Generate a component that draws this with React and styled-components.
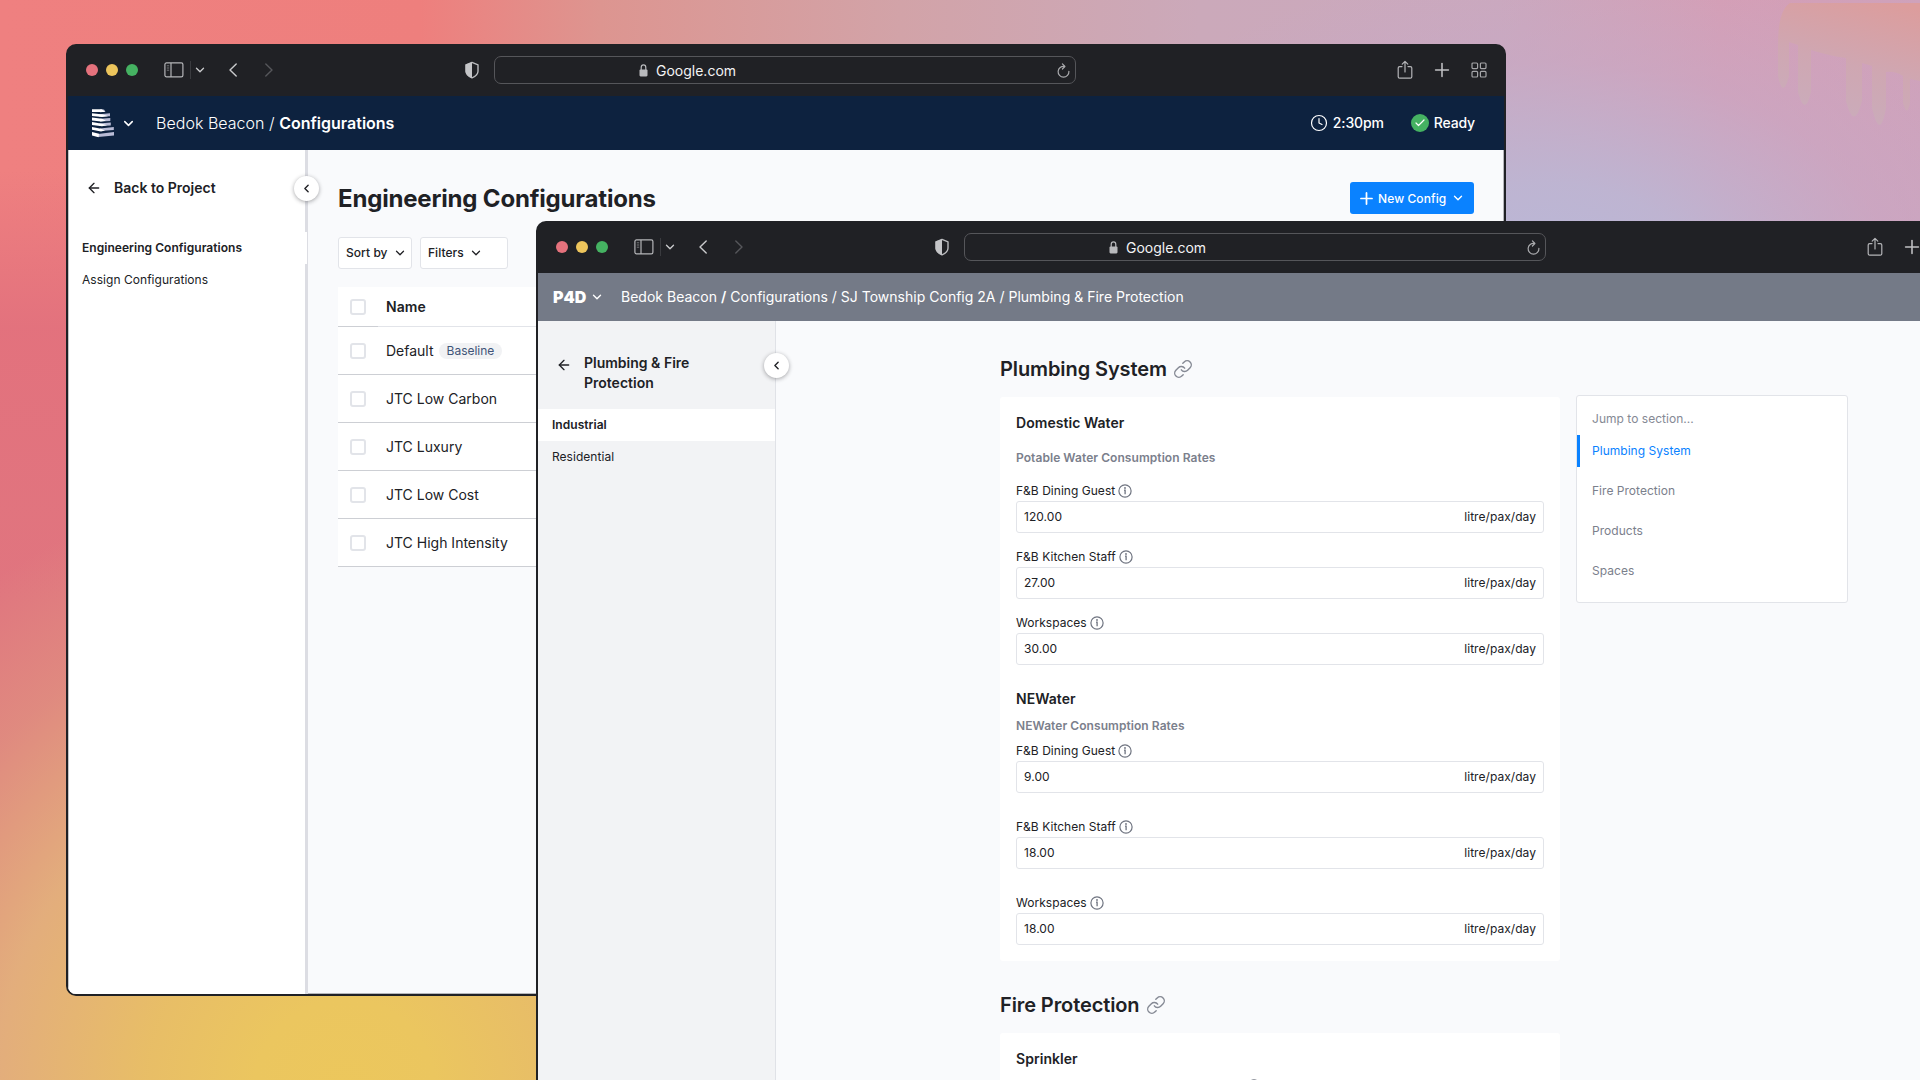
import React from 'react';
import styled, { createGlobalStyle } from 'styled-components'
import { ArrowLeft, Check, ChevronDown, ChevronLeft, Clock, Link, Plus } from 'lucide-react';

// data
const configs = [
  { name: 'Default', badge: 'Baseline' },
  { name: 'JTC Low Carbon' },
  { name: 'JTC Luxury' },
  { name: 'JTC Low Cost' },
  { name: 'JTC High Intensity' },
]

const domesticWater = [
  { label: 'F&B Dining Guest', value: '120.00' },
  { label: 'F&B Kitchen Staff', value: '27.00' },
  { label: 'Workspaces', value: '30.00' },
]

const newWater = [
  { label: 'F&B Dining Guest', value: '9.00' },
  { label: 'F&B Kitchen Staff', value: '18.00' },
  { label: 'Workspaces', value: '18.00' },
]

const sections = ['Plumbing System', 'Fire Protection', 'Products', 'Spaces']

// icons
const SidebarIcon = () => (
  <svg width="20" height="16" viewBox="0 0 20 16" fill="none" stroke="#b4b5b8" strokeWidth="1.2">
    <rect x="0.9" y="0.9" width="18" height="14" rx="1.6" />
    <path d="M7 1v14" />
    <path d="M2.8 3.8h2.4M2.8 6h2.4M2.8 8.2h2.4" stroke="#77787b" strokeWidth="1" />
  </svg>
)

const NavArrow = ({ flip, color }) => (
  <svg width="8" height="14" viewBox="0 0 8 14" fill="none" stroke={color} strokeWidth="1.4" strokeLinecap="round" strokeLinejoin="round">
    <path d={flip ? 'M0.8 0.9 7 7 0.8 13.1' : 'M7.2 0.9 1 7l6.2 6.1'} />
  </svg>
)

const ShieldIcon = () => (
  <svg width="16" height="18" viewBox="0 0 16 18">
    <path d="M8 1.4 14 3.8v6.4c0 3-2.6 5.1-6 6.6-3.4-1.5-6-3.6-6-6.6V3.8z" fill="none" stroke="#b9babd" strokeWidth="1.4" strokeLinejoin="round" />
    <path d="M8 1.2v15.8C4.4 15.4 1.6 13.3 1.6 10.2V3.6z" fill="#c4c5c8" />
  </svg>
)

const LockIcon = () => (
  <svg width="9" height="13" viewBox="0 0 9 13">
    <rect x="0.5" y="5.4" width="8" height="7" rx="1.1" fill="#b9babd" />
    <path d="M2.2 6V3.4a2.3 2.5 0 0 1 4.6 0V6" fill="none" stroke="#b9babd" strokeWidth="1.2" />
  </svg>
)

const ReloadIcon = () => (
  <svg width="13" height="15" viewBox="0 0 13 15" fill="none" stroke="#a9aaad" strokeWidth="1.2" strokeLinecap="round" strokeLinejoin="round">
    <path d="M11.9 8.3A5.4 5.4 0 1 1 7.4 3.4" />
    <path d="M5.4 0.9l2.5 2.6L5.4 6" />
  </svg>
)

const ShareIcon = () => (
  <svg width="16" height="20" viewBox="0 0 16 20" fill="none" stroke="#b4b5b8" strokeWidth="1.2" strokeLinecap="round" strokeLinejoin="round">
    <path d="M5 6.6H2.7A1.5 1.5 0 0 0 1.2 8.1v8.6a1.5 1.5 0 0 0 1.5 1.5h10.6a1.5 1.5 0 0 0 1.5-1.5V8.1a1.5 1.5 0 0 0-1.5-1.5H11" />
    <path d="M8 12V1.5M5.2 4.2 8 1.4l2.8 2.8" />
  </svg>
)

const TabsIcon = () => (
  <svg width="16" height="16" viewBox="0 0 16 16" fill="none" stroke="#a4a5a8" strokeWidth="1.2">
    <rect x="1" y="1" width="5.6" height="5.6" rx="1" />
    <rect x="9.4" y="1" width="5.6" height="5.6" rx="1" />
    <rect x="1" y="9.4" width="5.6" height="5.6" rx="1" />
    <rect x="9.4" y="9.4" width="5.6" height="5.6" rx="1" />
  </svg>
)

const InfoIcon = () => (
  <svg width="14" height="14" viewBox="0 0 14 14" fill="none" stroke="#6f7480">
    <circle cx="7" cy="7" r="6.1" strokeWidth="1.2" />
    <path d="M6 6.2h1.1v4" strokeWidth="1.3" />
    <circle cx="7" cy="4" r="0.9" fill="#6f7480" stroke="none" />
  </svg>
)

// stacked floors of a tower, lit on the left side
const TowerLogo = () => (
  <svg width="23" height="29" viewBox="0 0 23 29">
    <g fill="#b9bcd6">
      <path d="M8 0.6h4l1.5 2.2-5.5 0.4z" />
      <path d="M7 5.2 18 4.2v3L7 7.6z" />
      <path d="M8 9.8 18.3 9v3L8 12.4z" />
      <path d="M7 14.6 18.8 13.6v2.8L7 17z" />
      <path d="M8 19.6 21.8 18v3L8 22z" />
      <path d="M6 25 22 23v3.4L6 28z" />
    </g>
    <g fill="#ffffff">
      <path d="M0 0.2h10l3.2 2.7L0 2.9z" />
      <path d="M0 4.2 11 5.5l5 1.7-6 0.8L0 7z" />
      <path d="M0 8.6l10 1.2 4 1.9-5 0.9L0 11.4z" />
      <path d="M0 13.1l10 1.6 5 1.6-5 1L0 16z" />
      <path d="M0 17.9l9 1.8 4 1.7-4 1L0 20.8z" />
      <path d="M0 22.9l7 1.9-0.5 3.4L0 26.4z" />
    </g>
  </svg>
)

// paint dripping from the corner of the wallpaper
const Drips = () => (
  <DripsSvg width="142" height="126" viewBox="0 0 142 126">
    <defs>
      <linearGradient id="drip" x1="0.8" y1="0" x2="0.5" y2="1">
        <stop offset="0" stopColor="#dc9d9d" />
        <stop offset="0.55" stopColor="#cfa7b2" />
        <stop offset="1" stopColor="#caacbb" />
      </linearGradient>
    </defs>
    <path
      fill="url(#drip)"
      d="M12 3H142V81L132 79V103Q129 118 125 103V76Q117 71 108 72V108Q102 142 94 108V66L84 63V101Q76 132 68 101V58Q48 55 33 50V92Q27 118 20 92V45L11 42V76Q5 100 0 76V45Q0 10 12 3Z"
    />
  </DripsSvg>
)

// ** browser chrome shared by both windows
const BrowserBar = () => (
  <TitleBar>
    <Controls>
      <Light color="#e5727d" />
      <Light color="#edc55c" />
      <Light color="#45b262" />
      <PanelToggle>
        <SidebarIcon />
        <Divider />
        <ChevronDown size={14} color="#c8c9cb" strokeWidth={2.3} />
      </PanelToggle>
      <History>
        <NavArrow color="#c8c9cb" />
        <NavArrow flip color="#55565a" />
      </History>
    </Controls>
    <ShieldIcon />
    <UrlBox>
      <Url><LockIcon />Google.com</Url>
      <ReloadIcon />
    </UrlBox>
    <Actions>
      <ShareIcon />
      <Plus size={22} color="#c0c1c4" strokeWidth={1.7} />
      <TabsIcon />
    </Actions>
  </TitleBar>
)

const Fields = ({ items, gap }) => (
  <FieldList gap={gap}>
    {items.map((item) => (
      <div key={item.label}>
        <Label>{item.label} <InfoIcon /></Label>
        <InputBox>
          <span>{item.value}</span>
          <span>litre/pax/day</span>
        </InputBox>
      </div>
    ))}
  </FieldList>
)

const ConfigWindow = () => (
  <Window x={66} y={44}>
    <BrowserBar />
    <AppBar>
      <Logo><TowerLogo /></Logo>
      <ChevronDown size={15} color="#fff" strokeWidth={2.4} />
      <ProjectPath>Bedok Beacon / <b>Configurations</b></ProjectPath>
      <Status>
        <StatusItem><Clock size={18} strokeWidth={1.6} /><span>2:30pm</span></StatusItem>
        <StatusItem><Dot><Check size={12} strokeWidth={2.4} /></Dot><span>Ready</span></StatusItem>
      </Status>
    </AppBar>
    <Body edged>
      <ProjectNav>
        <BackRow>
          <ArrowLeft size={16} strokeWidth={2} />
          <span>Back to Project</span>
        </BackRow>
        <NavItem active>Engineering Configurations</NavItem>
        <NavItem>Assign Configurations</NavItem>
        <Collapse right={-13.5} top={25.5}><ChevronLeft size={13} strokeWidth={2.6} /></Collapse>
      </ProjectNav>
      <ConfigMain>
        <TitleRow>
          <PageTitle>Engineering Configurations</PageTitle>
          <NewButton>
            <Plus size={19} strokeWidth={2.2} />
            <span>New Config</span>
            <ChevronDown size={14} strokeWidth={2.4} />
          </NewButton>
        </TitleRow>
        <Filters>
          <FilterButton width={74}>Sort by<ChevronDown size={14} strokeWidth={2.2} /></FilterButton>
          <FilterButton width={88}>Filters<ChevronDown size={14} strokeWidth={2.2} /></FilterButton>
        </Filters>
        <HeadRow>
          <CheckCell><Checkbox /></CheckCell>
          <NameCell>Name</NameCell>
        </HeadRow>
        {configs.map((config) => (
          <Row key={config.name}>
            <Checkbox />
            {config.name}
            {config.badge && <Badge>{config.badge}</Badge>}
          </Row>
        ))}
      </ConfigMain>
    </Body>
  </Window>
)

const PlumbingWindow = () => (
  <Window x={536} y={221}>
    <BrowserBar />
    <AppBar slate>
      <Brand>P4D</Brand>
      <ChevronDown size={14} color="#fff" strokeWidth={2.4} />
      <Crumbs>Bedok Beacon <b>/</b> Configurations / SJ Township Config 2A / Plumbing &amp; Fire Protection</Crumbs>
    </AppBar>
    <Body>
      <SectionNav>
        <SectionBack>
          <ArrowLeft size={16} strokeWidth={2} />
          <span>Plumbing &amp; Fire Protection</span>
        </SectionBack>
        <SectionItem active>Industrial</SectionItem>
        <SectionItem>Residential</SectionItem>
        <Collapse right={-13.5} top={31.5}><ChevronLeft size={13} strokeWidth={2.6} /></Collapse>
      </SectionNav>
      <Content>
        <Column>
          <SectionTitle>Plumbing System <Link size={20} color="#858994" strokeWidth={1.7} /></SectionTitle>
          <Card>
            <CardTitle>Domestic Water</CardTitle>
            <SubTitle top={13} bottom={13}>Potable Water Consumption Rates</SubTitle>
            <Fields items={domesticWater} gap={14} />
            <CardTitle top={22}>NEWater</CardTitle>
            <SubTitle top={5} bottom={5}>NEWater Consumption Rates</SubTitle>
            <Fields items={newWater} gap={24} />
          </Card>
          <SectionTitle>Fire Protection <Link size={20} color="#858994" strokeWidth={1.7} /></SectionTitle>
          <Card>
            <CardTitle>Sprinkler</CardTitle>
            <HintRow><InfoIcon /></HintRow>
          </Card>
        </Column>
        <Toc>
          <TocLabel>Jump to section...</TocLabel>
          {sections.map((section, i) => (
            <TocItem key={section} active={i === 0}>{section}</TocItem>
          ))}
        </Toc>
      </Content>
    </Body>
  </Window>
)

const App = () => {
  return (
    <Desktop>
      <GlobalStyle />
      <Drips />
      <ConfigWindow />
      <PlumbingWindow />
    </Desktop>
  );
}

// styled-components
const GlobalStyle = createGlobalStyle`
  * {
    box-sizing: border-box;
  }

  body {
    margin: 0;
    font-family: Inter, "Liberation Sans", sans-serif;
    color: #202125;
  }

  svg {
    flex-shrink: 0;
  }
`

const Desktop = styled.div`
  position: relative;
  width: 1920px;
  height: 1080px;
  overflow: hidden;
  background:
    radial-gradient(circle at 345px 1090px, #ecc75c 0, #ebc65f 90px, rgba(232, 192, 102, 0.97) 200px, rgba(227, 178, 124, 0.92) 350px, rgba(223, 155, 128, 0.55) 490px, rgba(223, 120, 128, 0) 620px),
    linear-gradient(180deg, rgba(226, 113, 125, 0) 170px, rgba(226, 113, 125, 0.95) 330px, #e0757f 600px) 0 0 / 536px 100% no-repeat,
    radial-gradient(ellipse 500px 320px at 1550px 280px, #b9b8d8 0, rgba(188, 182, 212, 0.9) 30%, rgba(198, 170, 200, 0.5) 68%, rgba(200, 168, 194, 0) 100%),
    linear-gradient(90deg, #ef8080 0, #ee7f7d 420px, #dd9590 600px, #d2a3a8 900px, #cba9ba 1200px, #cba8bd 1500px, #d59eb5 1720px, #cfa2bb 1920px);
`

const DripsSvg = styled.svg`
  position: absolute;
  top: 0;
  right: 0;
`

const Window = styled.div`
  position: absolute;
  left: ${({ x }) => x}px;
  top: ${({ y }) => y}px;
  display: flex;
  flex-direction: column;
  width: 1440px;
  height: 952px;
  border: 2px solid #202125;
  border-radius: 10px;
  background-color: #202125;
  overflow: hidden;
`

const TitleBar = styled.div`
  display: flex;
  align-items: center;
  flex-shrink: 0;
  height: 50px;
  padding: 0 17px 2px 18px;
`

const Controls = styled.div`
  display: flex;
  align-items: center;
  gap: 8px;
  width: 378px;
`

const Light = styled.span`
  width: 12px;
  height: 12px;
  border-radius: 50%;
  background-color: ${({ color }) => color};
`

const PanelToggle = styled.div`
  display: flex;
  align-items: center;
  margin-left: 18px;
`

const Divider = styled.span`
  width: 1px;
  height: 18px;
  margin: 0 2px 0 6px;
  background-color: #3a3b3f;
`

const History = styled.div`
  display: flex;
  gap: 28px;
  margin-left: 14px;
`

const UrlBox = styled.div`
  display: flex;
  align-items: center;
  justify-content: space-between;
  width: 582px;
  height: 28px;
  margin-left: 14px;
  padding: 0 5px 0 144px;
  border: 1px solid #55565a;
  border-radius: 7px;
`

const Url = styled.div`
  display: flex;
  align-items: center;
  gap: 8px;
  color: #f3f3f4;
  font-size: 14px;
`

const Actions = styled.div`
  display: flex;
  align-items: center;
  gap: 18px;
  margin-left: auto;
`

const AppBar = styled.div`
  display: flex;
  align-items: center;
  flex-shrink: 0;
  height: ${({ slate }) => (slate ? 48 : 54)}px;
  padding: 0 29px 0 ${({ slate }) => (slate ? 15 : 24)}px;
  background-color: ${({ slate }) => (slate ? '#747a87' : '#0d223f')};
  color: white;
`

const Logo = styled.div`
  display: flex;
  width: 29px;
`

const ProjectPath = styled.div`
  margin-left: 20px;
  padding-bottom: 1px;
  font-size: 16px;
  font-weight: 300;
  letter-spacing: 0.03px;

  b {
    font-weight: 600;
    letter-spacing: 0;
  }
`

const Status = styled.div`
  display: flex;
  gap: 27px;
  margin-left: auto;
`

const StatusItem = styled.div`
  display: flex;
  align-items: center;
  gap: 5px;
  font-size: 14px;
  font-weight: 450;
  letter-spacing: -0.15px;

  span:last-child {
    padding-bottom: 1px;
  }
`

const Dot = styled.span`
  display: flex;
  align-items: center;
  justify-content: center;
  width: 18px;
  height: 18px;
  border-radius: 50%;
  background-color: #45b262;
`

const Brand = styled.div`
  width: 37px;
  padding-bottom: 1px;
  font-size: 16px;
  font-weight: 900;
`

const Crumbs = styled.div`
  margin-left: 17px;
  padding-bottom: 2px;
  font-size: 14px;
  letter-spacing: 0.01px;

  b {
    font-weight: 600;
  }
`

const Body = styled.div`
  display: flex;
  flex: 1;
  min-height: 0;
  background-color: #f9fafc;
  box-shadow: ${({ edged }) => (edged ? 'inset -1px -1px 0 #b5b6ba' : 'none')};
`

const ProjectNav = styled.div`
  position: relative;
  width: 240px;
  border-left: 1px solid #c4c5c8;
  border-right: 3px solid #dcdde3;
  background-color: white;
`

const BackRow = styled.div`
  display: flex;
  align-items: center;
  height: 76px;
  margin-bottom: 6px;
  padding-left: 17px;
  font-size: 14px;
  font-weight: 600;

  span {
    margin-left: 12px;
    padding-bottom: 2px;
  }
`

const NavItem = styled.div`
  height: 32px;
  margin-right: ${({ active }) => (active ? -2 : 0)}px;
  padding-left: 13px;
  background-color: white;
  font-size: 12px;
  font-weight: ${({ active }) => (active ? 600 : 400)};
  letter-spacing: 0.04px;
  line-height: 32px;
`

const Collapse = styled.div`
  position: absolute;
  top: ${({ top }) => top}px;
  right: ${({ right }) => right}px;
  z-index: 1;
  display: flex;
  align-items: center;
  justify-content: center;
  width: 25px;
  height: 25px;
  border-radius: 50%;
  background-color: white;
  box-shadow: 0 1px 4px rgba(32, 33, 37, 0.4);
`

const ConfigMain = styled.div`
  flex: 1;
  padding: 32px 30px 0 30px;
`

const TitleRow = styled.div`
  display: flex;
  align-items: center;
  justify-content: space-between;
  height: 32px;
`

const PageTitle = styled.h1`
  margin: 0;
  font-size: 24px;
  font-weight: 700;
  letter-spacing: -0.18px;
`

const NewButton = styled.div`
  display: flex;
  align-items: center;
  width: 124px;
  height: 32px;
  padding-left: 7px;
  border-radius: 3px;
  background-color: #0a82ff;
  color: white;
  font-size: 12px;
  font-weight: 450;
  letter-spacing: 0.1px;

  span {
    width: 73px;
    margin-left: 2px;
  }
`

const Filters = styled.div`
  display: flex;
  gap: 8px;
  margin: 23px 0 18px;
`

const FilterButton = styled.div`
  display: flex;
  align-items: center;
  gap: 5px;
  width: ${({ width }) => width}px;
  height: 32px;
  padding: 0 0 1px 7px;
  border: 1px solid #e2e4e9;
  border-radius: 3px;
  background-color: white;
  font-size: 12px;
  font-weight: 500;
  letter-spacing: 0.05px;
`

const Row = styled.div`
  display: flex;
  align-items: center;
  height: 48px;
  padding-left: 12px;
  border-bottom: 1px solid #cdcfd4;
  background-color: white;
  font-size: 14px;
`

const HeadRow = styled.div`
  display: flex;
  height: 40px;
  background-color: white;
  font-size: 14px;
  font-weight: 600;
  letter-spacing: 0.1px;
`

const CheckCell = styled.div`
  display: flex;
  align-items: center;
  width: 40px;
  padding-left: 12px;
  border-bottom: 1px solid #cdcfd4;
`

const NameCell = styled.div`
  display: flex;
  align-items: center;
  flex: 1;
  padding-left: 8px;
  border-bottom: 1px solid #e2e4e9;
`

const Checkbox = styled.span`
  flex-shrink: 0;
  width: 16px;
  height: 16px;
  margin-right: 20px;
  border: 2px solid #e2e4e9;
  border-radius: 3px;
`

const Badge = styled.span`
  height: 16px;
  margin-left: 5px;
  padding: 0 8px;
  border-radius: 8px;
  background-color: #f1f2f4;
  color: #3f5478;
  font-size: 12px;
  line-height: 16px;
`

const SectionNav = styled.div`
  position: relative;
  width: 238px;
  border-right: 1px solid #e0e2e7;
  background-color: #f2f3f5;
`

const SectionBack = styled.div`
  display: flex;
  align-items: flex-start;
  height: 88px;
  padding: 32px 70px 0 18px;
  font-size: 14px;
  font-weight: 600;
  line-height: 20px;

  svg {
    margin-top: 4px;
  }

  span {
    margin-left: 12px;
  }
`

const SectionItem = styled.div`
  height: 32px;
  padding-left: 14px;
  background-color: ${({ active }) => (active ? 'white' : 'transparent')};
  font-size: 12px;
  font-weight: ${({ active }) => (active ? 600 : 400)};
  letter-spacing: 0.04px;
  line-height: 32px;
`

const Content = styled.div`
  display: flex;
  align-items: flex-start;
  gap: 16px;
  padding-left: 224px;
`

const Column = styled.div`
  width: 560px;
  padding-top: 4px;
`

const SectionTitle = styled.h2`
  display: flex;
  align-items: center;
  gap: 6px;
  height: 28px;
  margin: 30px 0 14px;
  font-size: 20px;
  font-weight: 600;
  letter-spacing: -0.1px;
`

const Card = styled.div`
  padding: 14px 16px 16px;
  border-radius: 3px;
  background-color: white;
`

const CardTitle = styled.h3`
  margin: ${({ top }) => top || 0}px 0 0;
  font-size: 14px;
  font-weight: 600;
  letter-spacing: 0.05px;
  line-height: 24px;
`

const SubTitle = styled.p`
  margin: ${({ top }) => top}px 0 ${({ bottom }) => bottom}px;
  color: #7b808c;
  font-size: 12px;
  font-weight: 600;
  letter-spacing: 0.06px;
  line-height: 20px;
`

const FieldList = styled.div`
  display: flex;
  flex-direction: column;
  gap: ${({ gap }) => gap}px;
`

const Label = styled.div`
  display: flex;
  align-items: center;
  gap: 3px;
  height: 20px;
  padding-bottom: 1px;
  font-size: 12px;
  letter-spacing: 0.03px;
`

const InputBox = styled.div`
  display: flex;
  align-items: center;
  justify-content: space-between;
  height: 32px;
  padding: 0 7px 1px;
  border: 1px solid #e2e4e9;
  border-radius: 3px;
  font-size: 12px;
  letter-spacing: 0.05px;
`

const HintRow = styled.div`
  height: 40px;
  padding: 6px 0 0 231px;
`

const Toc = styled.div`
  width: 272px;
  height: 208px;
  margin-top: 74px;
  padding-top: 7px;
  border: 1px solid #e2e4e9;
  border-radius: 3px;
  background-color: white;
  font-size: 12px;
  letter-spacing: 0.03px;
  line-height: 32px;
`

const TocLabel = styled.div`
  padding-left: 15px;
  color: #858994;
`

const TocItem = styled.div`
  height: 32px;
  margin-bottom: 8px;
  padding-left: 12px;
  border-left: 3px solid ${({ active }) => (active ? '#0a82ff' : 'transparent')};
  color: ${({ active }) => (active ? '#0a82ff' : '#7b808c')};
`

export default App;
